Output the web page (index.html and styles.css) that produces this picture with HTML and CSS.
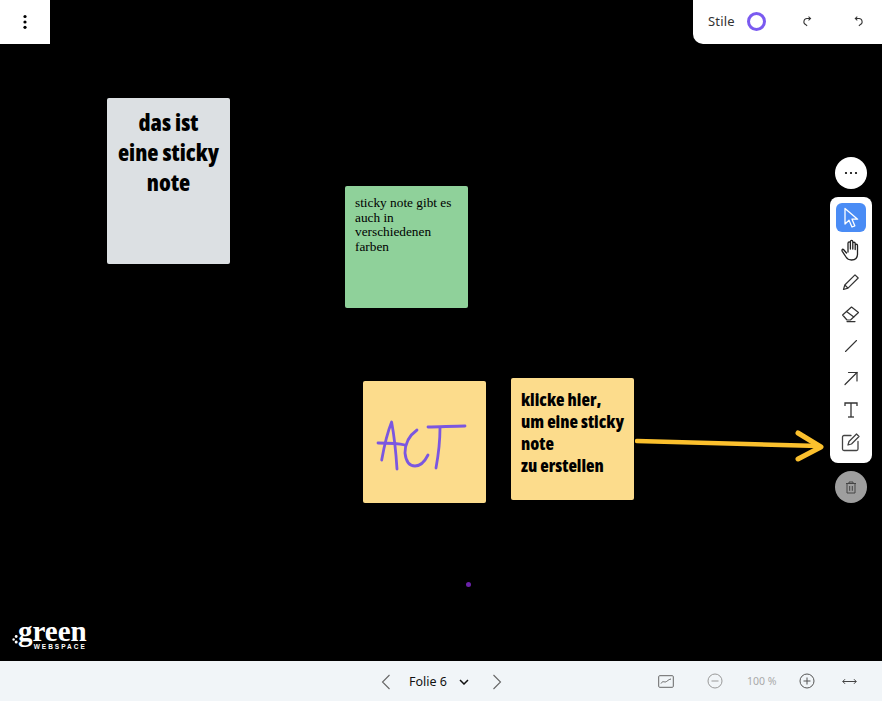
FILE: index.html
```html
<!DOCTYPE html>
<html lang="de">
<head>
  <meta charset="UTF-8" />
  <title>Folie 6</title>
  <link rel="stylesheet" href="styles.css">
</head>
<body>
  <main class="canvas">
    <button class="menu-btn" aria-label="Menu">
      <svg width="4" height="16" viewBox="0 0 4 16"><circle cx="2" cy="2.5" r="1.6"/><circle cx="2" cy="8" r="1.6"/><circle cx="2" cy="13.3" r="1.6"/></svg>
    </button>

    <div class="top-tools">
      <span class="stile-label">Stile</span>
      <span class="stile-ring"></span>
      <svg class="redo" width="12" height="13" viewBox="0 0 14 14" fill="none" stroke="#333" stroke-width="1.2"><path d="M9.5 3.5H6.5A3.8 3.8 0 0 0 4.6 10.8L6 12"/><path d="M7.6 1.2L10 3.5L7.6 5.6"/></svg>
      <svg class="undo" width="12" height="13" viewBox="0 0 14 14" fill="none" stroke="#333" stroke-width="1.2"><path d="M3.5 3.5H7.5A3.8 3.8 0 0 1 9.4 10.8L8 12"/><path d="M6.2 1.2L3.8 3.5L6.2 5.6"/></svg>
    </div>

    <div class="note note-grey">das ist<br>eine sticky<br>note</div>
    <div class="note note-green">sticky note gibt es auch in verschiedenen farben</div>
    <div class="note note-yellow note-act">
      <svg width="123" height="122" viewBox="0 0 123 122" fill="none" stroke="#7b57e0" stroke-width="2.8" stroke-linecap="round" stroke-linejoin="round">
        <path d="M18.7 79C21 66 25 50 28.6 41C31 54 33 72 34 88"/>
        <path d="M15 62C24 62 34 62 42 64"/>
        <path d="M54 49C47 54 42 62 42 72C43 81 47 85 52 85C57 85 62 80 65 74"/>
        <path d="M65 46C76 46 90 45 102 45"/>
        <path d="M77 47C77 60 75 76 73 87"/>
      </svg>
    </div>
    <div class="note note-yellow note-hint">klicke hier,<br>um eine sticky<br>note<br>zu erstellen</div>

    <svg class="big-arrow" width="190" height="34" viewBox="0 0 190 34" fill="none" stroke="#fbc02d" stroke-linecap="round" stroke-linejoin="round">
      <path d="M2 11L184 16" stroke-width="4.5"/>
      <path d="M163 3L186 17L163 29" stroke-width="5"/>
    </svg>

    <span class="dot"></span>

    <button class="round-btn more-btn" aria-label="Mehr">
      <svg width="14" height="4" viewBox="0 0 14 4"><circle cx="2" cy="2" r="1.1"/><circle cx="7" cy="2" r="1.1"/><circle cx="12" cy="2" r="1.1"/></svg>
    </button>

    <div class="toolbar">
      <button class="tool tool-active" aria-label="Auswahl">
        <svg width="20" height="22" viewBox="0 0 20 22" fill="none" stroke="#fff" stroke-width="1.3" stroke-linejoin="round"><path d="M4 1.5V17L8 13.2L11 20L13.8 18.8L11 12.2L16.6 12.2Z"/></svg>
      </button>
      <button class="tool" aria-label="Hand">
        <svg width="22" height="22" viewBox="0 0 22 22" fill="none" stroke="#222" stroke-width="1.3" stroke-linecap="round" stroke-linejoin="round"><path d="M6.5 14L3.5 10.5C2.5 9.5 1.5 11 2.3 12.3L6 18C7.2 20 9 21 11.5 21C15.5 21 17.5 18.5 17.5 15V6.5C17.5 4.8 15.2 4.8 15.2 6.5V10.5M15.2 10.5V4.5C15.2 2.8 12.8 2.8 12.8 4.5V10M12.8 10V2.8C12.8 1 10.4 1 10.4 2.8V10M10.4 10V4.2C10.4 2.5 8 2.5 8 4.2V13"/></svg>
      </button>
      <button class="tool" aria-label="Stift">
        <svg width="18" height="18" viewBox="0 0 18 18" fill="none" stroke="#333" stroke-width="1.2" stroke-linejoin="round"><path d="M1.5 16.5L2.8 12L13 1.8L16.2 5L6 15.2Z"/><path d="M2.8 12L6 15.2"/></svg>
      </button>
      <button class="tool" aria-label="Radierer">
        <svg width="20" height="18" viewBox="0 0 20 18" fill="none" stroke="#333" stroke-width="1.2" stroke-linejoin="round" stroke-linecap="round"><path d="M1.6 10L10.5 2L17.5 7.5L9.5 15H6Z"/><path d="M5.5 6.5L12.8 12"/><path d="M6 16.6H14"/></svg>
      </button>
      <button class="tool" aria-label="Linie">
        <svg width="16" height="16" viewBox="0 0 16 16" fill="none" stroke="#333" stroke-width="1.1" stroke-linecap="round"><path d="M2.5 13.5L13.5 2.5"/></svg>
      </button>
      <button class="tool" aria-label="Pfeil">
        <svg width="16" height="16" viewBox="0 0 16 16" fill="none" stroke="#333" stroke-width="1.2" stroke-linecap="round"><path d="M2 14.5L14 2.5"/><path d="M5.5 2.5H14V11"/></svg>
      </button>
      <button class="tool" aria-label="Text">
        <svg width="16" height="18" viewBox="0 0 16 18" fill="none" stroke="#333" stroke-width="1.3"><path d="M2 5V2H14V5"/><path d="M8 2V16"/><path d="M5 16H11"/></svg>
      </button>
      <button class="tool" aria-label="Notiz">
        <svg width="20" height="20" viewBox="0 0 20 20" fill="none" stroke="#444" stroke-width="1.3" stroke-linejoin="round" stroke-linecap="round"><path d="M10 3.5H3A1.5 1.5 0 0 0 1.5 5V17A1.5 1.5 0 0 0 3 18.5H15.5A1.5 1.5 0 0 0 17 17V9.5"/><path d="M7 13L8 9.5L15.5 2L18 4.5L10.5 12Z"/></svg>
      </button>
    </div>

    <button class="round-btn trash-btn" aria-label="Löschen">
      <svg width="12" height="13" viewBox="0 0 12 13" fill="none" stroke="#444" stroke-width="1"><path d="M1 2.5H11"/><path d="M4 2.5V1H8V2.5"/><path d="M2 2.5V12H10V2.5"/><path d="M4.7 5V9.8M7.3 5V9.8"/></svg>
    </button>

    <div class="logo">
      <svg class="logo-dots" width="6" height="9" viewBox="0 0 6 9" fill="#fff"><circle cx="4.2" cy="1.5" r="1.4"/><circle cx="1.6" cy="4.5" r="1.2"/><circle cx="4.2" cy="7" r="1.5"/></svg>
      <div class="logo-text">
        <span class="logo-name">green</span>
        <span class="logo-sub">WEBSPACE</span>
      </div>
    </div>
  </main>

  <footer class="bottom-bar">
    <div class="pager">
      <svg width="10" height="16" viewBox="0 0 10 16" fill="none" stroke="#666" stroke-width="1.1"><path d="M8.5 1L1.5 8L8.5 15"/></svg>
      <span class="slide-name">Folie 6</span>
      <svg class="chevron" width="10" height="6" viewBox="0 0 10 6" fill="none" stroke="#111" stroke-width="1.5"><path d="M1 1L5 5L9 1"/></svg>
      <svg class="next" width="10" height="16" viewBox="0 0 10 16" fill="none" stroke="#666" stroke-width="1.1"><path d="M1.5 1L8.5 8L1.5 15"/></svg>
    </div>
    <div class="zoom-tools">
      <svg width="16" height="13" viewBox="0 0 16 13" fill="none" stroke="#666" stroke-width="1"><rect x="0.7" y="0.7" width="14.6" height="11.6" rx="1"/><path d="M3 8.5C5 5 6.5 8 8.5 6.5S11 4.5 13 4"/></svg>
      <svg class="zoom-out" width="16" height="16" viewBox="0 0 16 16" fill="none" stroke="#999" stroke-width="1"><circle cx="8" cy="8" r="7"/><path d="M4.5 8H11.5"/></svg>
      <span class="zoom-value">100 %</span>
      <svg class="zoom-in" width="16" height="16" viewBox="0 0 16 16" fill="none" stroke="#555" stroke-width="1"><circle cx="8" cy="8" r="7"/><path d="M4.5 8H11.5M8 4.5V11.5"/></svg>
      <svg class="fit" width="15" height="7" viewBox="0 0 15 7" fill="none" stroke="#444" stroke-width="1"><path d="M0.8 3.5H14.2"/><path d="M3 1.2L0.8 3.5L3 5.8M12 1.2L14.2 3.5L12 5.8"/></svg>
    </div>
  </footer>
</body>
</html>
```

FILE: styles.css
```css
html, body {
  height: 100%;
  margin: 0;
  padding: 0;
  overflow: hidden;
}

body {
  display: flex;
  flex-direction: column;
  font-family: "Noto Sans", sans-serif;
  background: #000;
}

button {
  border: none;
  padding: 0;
  cursor: pointer;
  display: flex;
  align-items: center;
  justify-content: center;
}

svg {
  display: block;
}

.canvas {
  position: relative;
  flex: 1;
  background: #000;
}

.menu-btn {
  position: absolute;
  left: 0;
  top: 0;
  width: 50px;
  height: 44px;
  background: #fff;
}

.top-tools {
  position: absolute;
  right: 0;
  top: 0;
  width: 189px;
  height: 44px;
  box-sizing: border-box;
  padding: 0 0 2px 15px;
  display: flex;
  align-items: center;
  background: #fff;
  border-bottom-left-radius: 10px;
}

.stile-label {
  font-size: 13px;
  color: #333;
  letter-spacing: 0.2px;
}

.stile-ring {
  width: 13px;
  height: 13px;
  margin-left: 12px;
  border: 3px solid #7a5af0;
  border-radius: 50%;
}

.redo {
  margin-left: 36px;
}

.undo {
  margin-left: 38px;
}

.note {
  position: absolute;
  border-radius: 2px;
  box-sizing: border-box;
  color: #000;
}

.note-grey,
.note-hint {
  font-family: "Open Sans", sans-serif;
  font-weight: 800;
  font-stretch: 75%;
  white-space: nowrap;
}

.note-grey {
  left: 107px;
  top: 98px;
  width: 123px;
  height: 166px;
  background: #dce0e3;
  padding-top: 9px;
  text-align: center;
  font-size: 23px;
  line-height: 30px;
}

.note-green {
  left: 345px;
  top: 186px;
  width: 123px;
  height: 122px;
  background: #8fd19a;
  padding: 10px;
  font-family: "Liberation Serif", serif;
  font-size: 13.3px;
  line-height: 14.7px;
}

.note-yellow {
  background: #fcdc8c;
}

.note-act {
  left: 363px;
  top: 381px;
  width: 123px;
  height: 122px;
}

.note-hint {
  left: 511px;
  top: 378px;
  width: 123px;
  height: 122px;
  padding: 10px;
  font-size: 17.5px;
  line-height: 22px;
}

.big-arrow {
  position: absolute;
  left: 635px;
  top: 430px;
}

.dot {
  position: absolute;
  left: 466px;
  top: 582px;
  width: 5px;
  height: 5px;
  border-radius: 50%;
  background: #6a22a8;
}

.round-btn {
  position: absolute;
  left: 835px;
  width: 32px;
  height: 32px;
  border-radius: 50%;
}

.more-btn {
  top: 157px;
  background: #fff;
}

.trash-btn {
  top: 471px;
  background: #9e9e9e;
}

.toolbar {
  position: absolute;
  left: 830px;
  top: 197px;
  width: 42px;
  height: 266px;
  box-sizing: border-box;
  padding-top: 6px;
  background: #fff;
  border-radius: 8px;
  display: flex;
  flex-direction: column;
  align-items: center;
}

.tool {
  flex: none;
  width: 30px;
  height: 29px;
  margin-bottom: 3.1px;
  background: none;
  border-radius: 6px;
}

.tool-active {
  background: #4a8cf5;
}

.logo {
  position: absolute;
  left: 12px;
  top: 620px;
  display: flex;
  align-items: center;
  color: #fff;
}

.logo-dots {
  margin-top: 8px;
}

.logo-text {
  display: flex;
  flex-direction: column;
  align-items: flex-end;
}

.logo-name {
  font-family: "Liberation Serif", serif;
  font-weight: 700;
  font-size: 29px;
  line-height: 23px;
}

.logo-sub {
  font-family: "Liberation Sans", sans-serif;
  font-weight: 700;
  font-size: 6.5px;
  line-height: 7px;
  letter-spacing: 2px;
}

.bottom-bar {
  position: relative;
  height: 40px;
  flex: none;
  background: #f1f5f8;
}

.pager {
  position: absolute;
  left: 381px;
  top: 12px;
  display: flex;
  align-items: center;
}

.slide-name {
  margin-left: 18px;
  font-size: 12.5px;
  color: #111;
}

.chevron {
  margin-left: 12px;
}

.next {
  margin-left: 23px;
}

.zoom-tools {
  position: absolute;
  left: 658px;
  top: 12px;
  display: flex;
  align-items: center;
}

.zoom-out {
  margin-left: 33px;
}

.zoom-value {
  margin-left: 24px;
  font-size: 10.5px;
  color: #aaa;
}

.zoom-in {
  margin-left: 23px;
}

.fit {
  margin-left: 27px;
}
```
